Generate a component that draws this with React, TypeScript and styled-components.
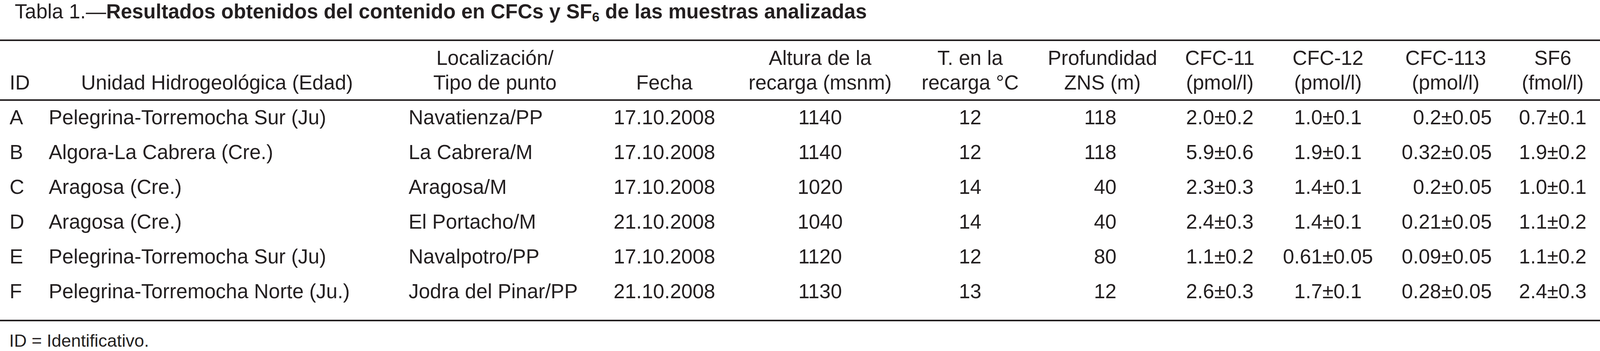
import styled, { createGlobalStyle } from 'styled-components';

// horizontal design pixel of the 4335px wide reference (the viewport may be narrower);
// vertical sizes stay in plain px since the height is the full 898px
const u = (n: number) => `calc(${n} * var(--u))`;

const GlobalStyle = createGlobalStyle`
  html, body {
    margin: 0;
    padding: 0;
    overflow: hidden;
    background: #ffffff;
  }
  body {
    font-family: 'Liberation Sans', Arial, Helvetica, sans-serif;
    color: #231f20;
  }
`;

type Align = 'left' | 'center' | 'right';

interface ColumnDef {
  width: number;
  head: string[];
  headAlign: Align;
  bodyAlign: Align;
  padL?: number;
  padR?: number;
  bodyPadR?: number;
}

// widths follow the printed table, paddings are inside them (border-box)
const columns: ColumnDef[] = [
  { width: 132, head: ['ID'], headAlign: 'left', bodyAlign: 'left', padL: 26 },
  { width: 912, head: ['Unidad Hidrogeológica (Edad)'], headAlign: 'center', bodyAlign: 'left' },
  { width: 531, head: ['Localización/', 'Tipo de punto'], headAlign: 'center', bodyAlign: 'left', padL: 63 },
  { width: 450, head: ['Fecha'], headAlign: 'center', bodyAlign: 'center' },
  { width: 394, head: ['Altura de la', 'recarga (msnm)'], headAlign: 'center', bodyAlign: 'center' },
  { width: 419, head: ['T. en la', 'recarga °C'], headAlign: 'center', bodyAlign: 'center' },
  { width: 298, head: ['Profundidad', 'ZNS (m)'], headAlign: 'center', bodyAlign: 'right', bodyPadR: 111 },
  { width: 338, head: ['CFC-11', '(pmol/l)'], headAlign: 'center', bodyAlign: 'center' },
  { width: 248, head: ['CFC-12', '(pmol/l)'], headAlign: 'center', bodyAlign: 'center' },
  { width: 390, head: ['CFC-113', '(pmol/l)'], headAlign: 'center', bodyAlign: 'right', bodyPadR: 70 },
  { width: 223, head: ['SF6', '(fmol/l)'], headAlign: 'center', bodyAlign: 'center', padR: 33 },
];

const rows: string[][] = [
  ['A', 'Pelegrina-Torremocha Sur (Ju)', 'Navatienza/PP', '17.10.2008', '1140', '12', '118', '2.0±0.2', '1.0±0.1', '0.2±0.05', '0.7±0.1'],
  ['B', 'Algora-La Cabrera (Cre.)', 'La Cabrera/M', '17.10.2008', '1140', '12', '118', '5.9±0.6', '1.9±0.1', '0.32±0.05', '1.9±0.2'],
  ['C', 'Aragosa (Cre.)', 'Aragosa/M', '17.10.2008', '1020', '14', '40', '2.3±0.3', '1.4±0.1', '0.2±0.05', '1.0±0.1'],
  ['D', 'Aragosa (Cre.)', 'El Portacho/M', '21.10.2008', '1040', '14', '40', '2.4±0.3', '1.4±0.1', '0.21±0.05', '1.1±0.2'],
  ['E', 'Pelegrina-Torremocha Sur (Ju)', 'Navalpotro/PP', '17.10.2008', '1120', '12', '80', '1.1±0.2', '0.61±0.05', '0.09±0.05', '1.1±0.2'],
  ['F', 'Pelegrina-Torremocha Norte (Ju.)', 'Jodra del Pinar/PP', '21.10.2008', '1130', '13', '12', '2.6±0.3', '1.7±0.1', '0.28±0.05', '2.4±0.3'],
];

const App = () => {
  return (
    <>
      <GlobalStyle />
      <Page>
        <Caption>
          Tabla 1.—<strong>Resultados obtenidos del contenido en CFCs y SF<Sub>6</Sub> de las muestras analizadas</strong>
        </Caption>
        <Table>
          <thead>
            <tr>
              {columns.map((c, i) => (
                <HeadCell key={i} $w={c.width} $align={c.headAlign} $padL={c.padL ?? 0} $padR={c.padR ?? 0}>
                  {c.head.map((line, j) => (
                    <span key={j}>
                      {j > 0 && <br />}
                      {line}
                    </span>
                  ))}
                </HeadCell>
              ))}
            </tr>
          </thead>
          <tbody>
            {rows.map((r, ri) => (
              <tr key={ri}>
                {r.map((v, ci) => {
                  const c = columns[ci];
                  return (
                    <BodyCell
                      key={ci}
                      $align={c.bodyAlign}
                      $padL={c.padL ?? 0}
                      $padR={c.bodyPadR ?? c.padR ?? 0}
                      $last={ri === rows.length - 1}
                    >
                      {v}
                    </BodyCell>
                  );
                })}
              </tr>
            ))}
          </tbody>
        </Table>
        <Footnote>ID = Identificativo.</Footnote>
      </Page>
    </>
  );
};

export default App;

const Page = styled.div`
  --u: calc(100vw / 4335);
  width: ${u(4335)};
  height: 898px;
  overflow: hidden;
`;

const Caption = styled.div`
  padding-left: ${u(40)};
  font-size: ${u(55)};
  line-height: 58px;
  white-space: nowrap;
  margin-bottom: 43px;

  strong {
    font-weight: 700;
  }
`;

const Sub = styled.sub`
  font-size: ${u(36)};
  line-height: 0;
  vertical-align: -8px;
`;

const Table = styled.table`
  width: ${u(4335)};
  table-layout: fixed;
  border-collapse: separate;
  border-spacing: 0;
  font-size: ${u(55)};
`;

const HeadCell = styled.th<{ $w: number; $align: Align; $padL: number; $padR: number }>`
  box-sizing: border-box;
  width: ${(p) => u(p.$w)};
  font-weight: 400;
  text-align: ${(p) => p.$align};
  vertical-align: bottom;
  white-space: nowrap;
  line-height: 63px;
  padding: 12px ${(p) => u(p.$padR)} 11px ${(p) => u(p.$padL)};
  border-top: 4px solid #231f20;
  border-bottom: 4px solid #231f20;
`;

const BodyCell = styled.td<{ $align: Align; $padL: number; $padR: number; $last: boolean }>`
  box-sizing: border-box;
  text-align: ${(p) => p.$align};
  vertical-align: top;
  white-space: nowrap;
  line-height: 85px;
  padding: 0 ${(p) => u(p.$padR)} ${(p) => (p.$last ? 30 : 4)}px ${(p) => u(p.$padL)};
  border-bottom: ${(p) => (p.$last ? '4px solid #231f20' : 'none')};
`;

const Footnote = styled.div`
  margin-top: 32px;
  padding-left: ${u(25)};
  font-size: ${u(47.5)};
  line-height: 36px;
  white-space: nowrap;
`;
